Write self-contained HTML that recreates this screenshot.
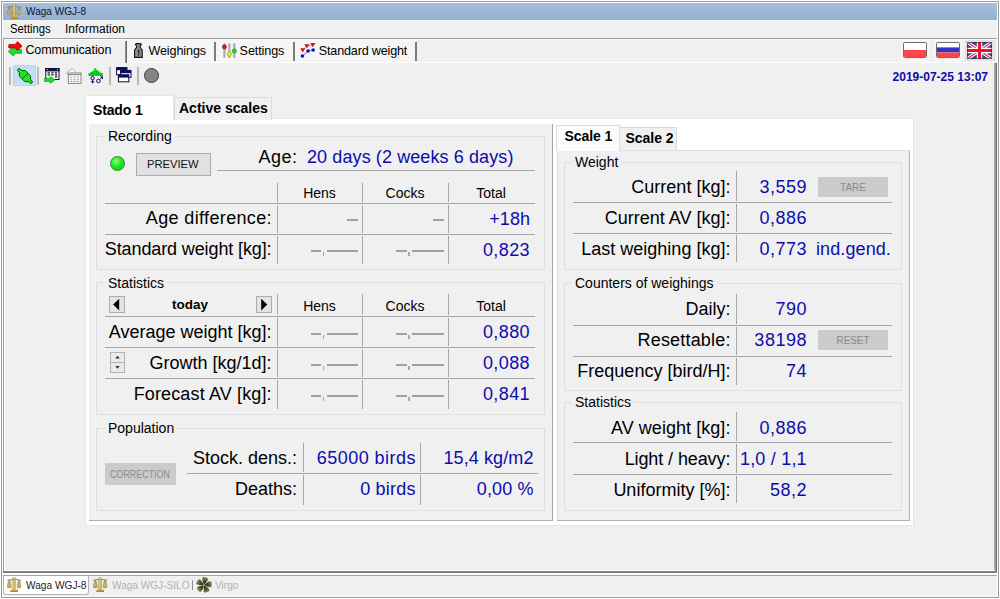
<!DOCTYPE html>
<html><head><meta charset="utf-8">
<title>Waga WGJ-8</title>
<style>
*{box-sizing:border-box;margin:0;padding:0}
html,body{width:1000px;height:599px;overflow:hidden;background:#fff}
body{font-family:"Liberation Sans",sans-serif;position:relative;color:#000}
.a{position:absolute}
.t{position:absolute;white-space:pre;line-height:1}
.hl{position:absolute;height:1px;background:#a6a6a6}
.vl{position:absolute;width:1px;background:#a6a6a6}
.big{font-size:18px}
.sm{font-size:14px}
.blue{color:#0c0cae}
.gb{position:absolute;border:1px solid #dfdfdf}
.gbl{position:absolute;background:#f0f0f0;font-size:14px;line-height:1;padding:0 3px;white-space:pre}
.ds{position:absolute;height:1.7px;background:#a0a0a0}
</style></head><body>
<svg width="0" height="0" style="position:absolute"><defs>
<linearGradient id="gold" x1="0" x2="1" y1="0" y2="0"><stop offset="0" stop-color="#a88838"/><stop offset=".45" stop-color="#e2d290"/><stop offset="1" stop-color="#b09238"/></linearGradient>
<linearGradient id="pan" x1="0" x2="0" y1="0" y2="1"><stop offset="0" stop-color="#9a8c80"/><stop offset=".5" stop-color="#c8b468"/><stop offset="1" stop-color="#c8a840"/></linearGradient>
<radialGradient id="fan" cx=".5" cy=".5" r=".5"><stop offset="0" stop-color="#20200f"/><stop offset=".55" stop-color="#4a4c2a"/><stop offset="1" stop-color="#a4aa78"/></radialGradient>
<radialGradient id="grn" cx=".4" cy=".35" r=".7"><stop offset="0" stop-color="#6f6"/><stop offset=".6" stop-color="#1fe31f"/><stop offset="1" stop-color="#11c011"/></radialGradient>
</defs></svg>
<div class="a" style="left:1px;top:1px;width:998px;height:597px;border:1px solid #999;background:#fff"></div>
<div class="a" style="left:3px;top:3px;width:994px;height:17px;background:linear-gradient(#a7bfde,#9bb5d7 60%,#97b1d4)"></div>
<div class="a" style="left:3px;top:20px;width:994px;height:576px;background:#f0f0f0"></div>
<div class="a" style="left:3px;top:20px;width:994px;height:18px;background:#f1f1f1"></div>
<div class="t" style="left:25.8px;top:6px;font-size:11.2px;color:#0c1428;transform-origin:0 0;transform:scaleX(.9)">Waga WGJ-8</div>
<div class="t" style="left:10px;top:23px;font-size:12px;transform-origin:0 0;transform:scaleX(.94)">Settings</div>
<div class="t" style="left:65px;top:23px;font-size:12px">Information</div>
<div class="a" style="left:3px;top:38px;width:994px;height:1px;background:#9c9c9c"></div>
<div class="a" style="left:127px;top:40px;width:289px;height:22px;background:#f5f5f5"></div>
<div class="a" style="left:127px;top:39px;width:868px;height:1px;background:#fafafa"></div>
<div class="a" style="left:4px;top:39px;width:123px;height:24px;background:#f0f0f0;border-left:1px solid #fff;border-top:1px solid #fff"></div>
<div class="a" style="left:125.2px;top:40.6px;width:1.7px;height:22px;background:linear-gradient(90deg,#9a9a9a,#5c5c5c)"></div>
<div class="a" style="left:127px;top:62px;width:868px;height:1px;background:#fff"></div>
<div class="t" style="left:25.4px;top:43.8px;font-size:12.6px;letter-spacing:-0.12px">Communication</div>
<div class="t" style="left:148.4px;top:45.2px;font-size:12.6px;letter-spacing:-0.1px">Weighings</div>
<div class="t" style="left:239.6px;top:45.2px;font-size:12.6px;letter-spacing:-0.1px">Settings</div>
<div class="t" style="left:318.8px;top:45.2px;font-size:12.6px;letter-spacing:-0.18px">Standard weight</div>
<div class="a" style="left:214.4px;top:42px;width:1.4px;height:19px;background:#7c7c7c"></div>
<div class="a" style="left:293.4px;top:42px;width:1.4px;height:19px;background:#7c7c7c"></div>
<div class="a" style="left:415.4px;top:42px;width:1.4px;height:19px;background:#7c7c7c"></div>
<div class="a" style="left:994.4px;top:63px;width:1.3px;height:509px;background:#a2a2a2"></div>
<div class="a" style="left:995.6px;top:62.6px;width:1.4px;height:510px;background:#6a6a6a"></div>
<div class="a" style="left:3px;top:571px;width:994px;height:2px;background:#7e7e7e"></div>
<div class="a" style="left:3px;top:570px;width:992px;height:1px;background:#fff"></div>
<div class="a" style="left:3px;top:573px;width:994px;height:2px;background:#fff"></div>
<div class="a" style="left:3px;top:575px;width:994px;height:1px;background:#a0a0a0"></div>
<div class="a" style="left:4px;top:63px;width:1px;height:507px;background:#fff"></div>
<div class="a" style="left:3px;top:39px;width:1px;height:532px;background:#9c9c9c"></div>
<div class="t blue" style="right:12px;top:71px;font-size:12px;font-weight:bold">2019-07-25 13:07</div>
<div class="a" style="left:13px;top:65px;width:23px;height:21px;background:#c2dff5;border:1px solid #b4d6f2"></div>
<div class="a" style="left:9.3px;top:67px;width:1.7px;height:18px;background:#bababa"></div>
<div class="a" style="left:37.2px;top:67px;width:1.7px;height:18px;background:#bababa"></div>
<div class="a" style="left:109.3px;top:67px;width:1.7px;height:18px;background:#bababa"></div>
<div class="a" style="left:137.2px;top:67px;width:1.7px;height:18px;background:#bababa"></div>
<svg class="a" style="left:16.6px;top:67.5px" width="16" height="16" viewBox="0 0 16 16"><g transform="translate(8,8) rotate(45)"><path d="M-9.4 -1.4 L-6.8 -1.4 L-3.6 -4.1 L3.6 -4.1 L6.8 -1.4 L9.4 -1.4 Q10.2 0 9.4 1.4 L6.8 1.4 L3.6 4.1 L-3.6 4.1 L-6.8 1.4 L-9.4 1.4 Q-10.2 0 -9.4 -1.4Z" fill="#22e422" stroke="#054a05" stroke-width=".9" stroke-linejoin="round"/><path d="M0 -4.1 L0 4.1" stroke="#054a05" stroke-width=".8"/></g></svg>
<svg class="a" style="left:43.6px;top:67.6px" width="16" height="16" viewBox="0 0 16 16"><rect x="1.8" y="0.5" width="13.2" height="11" fill="#fff" stroke="#0c0c38" stroke-width="1"/><rect x="1.8" y="0.5" width="13.2" height="2.4" fill="#101070" stroke="#0c0c38" stroke-width="1"/><circle cx="3.4" cy="1.6" r=".6" fill="#dde"/><circle cx="13.4" cy="1.6" r=".6" fill="#dde"/><g stroke="#181818" stroke-width="1.1"><path d="M3.6 4.9 h2.4 M7.2 4.9 h2.4 M10.8 4.9 h2.4 M3.6 6.9 h2.4 M7.2 6.9 h2.4 M10.8 6.9 h2.4 M10.8 8.9 h2.4"/></g><path d="M0.6 10.2 L6.2 10.2 L6.2 8.4 L11 11.8 L6.2 15.4 L6.2 13.4 L0.6 13.4Z" fill="#1fdc2a" stroke="#0c9a14" stroke-width=".7" stroke-linejoin="round"/></svg>
<svg class="a" style="left:65.6px;top:67.6px" width="16" height="16" viewBox="0 0 16 16"><path d="M0.6 4.6 L6.2 0.6 L10.6 5.4 L6 5.4 L2 7Z" fill="#fff" stroke="#9a9a9a" stroke-width=".8" stroke-linejoin="round"/><rect x="2.4" y="5" width="12.6" height="10.4" fill="#fff" stroke="#8e8e8e" stroke-width="1.1"/><path d="M2.4 6.6 h12.6" stroke="#8e8e8e" stroke-width="1.2"/><g stroke="#9c9c9c" stroke-width="1.1"><path d="M4.4 9 h2 M7.6 9 h2 M10.8 9 h2 M4.4 11.2 h2 M7.6 11.2 h2 M10.8 11.2 h2 M4.4 13.4 h2 M7.6 13.4 h2 M10.8 13.4 h2"/></g></svg>
<svg class="a" style="left:88px;top:67.8px" width="16" height="16" viewBox="0 0 16 16"><path d="M0.3 8 L0.3 5 L2.2 5 L2.2 4 L4.2 4 L4.2 2.8 L6 2.8 L6 0.2 L8.4 0.2 L8.4 2.2 L10.4 2.2 L10.4 3.6 L12.6 3.6 L12.6 5 L15 5 L15 8Z" fill="#14e01e"/><g stroke="#0a9c12" stroke-width=".7"><path d="M2.2 5V8 M4.2 4V8 M6 2.8V8 M8.4 2.2V8 M10.4 3.6V8 M12.6 5V8"/></g><circle cx="4.6" cy="10.2" r="1.7" fill="none" stroke="#101060" stroke-width="1"/><path d="M4.6 12 V15.4 M2.8 13.8 H6.4" stroke="#101060" stroke-width="1"/><circle cx="10.4" cy="13" r="1.8" fill="none" stroke="#101060" stroke-width="1"/><path d="M11.8 11.6 L14.4 9 " stroke="#101060" stroke-width="1" fill="none"/><path d="M12 8.2 H15 V11.4Z" fill="#101060"/></svg>
<svg class="a" style="left:115.8px;top:67.4px" width="16" height="16" viewBox="0 0 16 16"><rect x="0.6" y="0.6" width="10.4" height="7.2" fill="#fff" stroke="#0a0a3c" stroke-width="1"/><rect x="0.6" y="0.6" width="10.4" height="2.6" fill="#0c0c68"/><rect x="4.6" y="3.4" width="10.4" height="7" fill="#fff" stroke="#0a0a3c" stroke-width="1"/><rect x="4.6" y="3.4" width="10.4" height="2.8" fill="#0c0c68"/><rect x="2.4" y="7.8" width="10.4" height="7" fill="#fff" stroke="#0a0a3c" stroke-width="1"/><rect x="2.4" y="7.8" width="10.4" height="2.8" fill="#0c0c68"/></svg>
<div class="a" style="left:144px;top:67.7px;width:15px;height:15px;border-radius:50%;background:#848484;border:1px solid #3c3c3c"></div>
<svg class="a" style="left:7.6px;top:40.6px" width="14.5" height="15.5" viewBox="0 0 14.5 15.5"><path d="M13.8 8.7 L7.6 8.7 L5 6 L0.4 10.4 L5 14.9 L7.6 12.2 L13.8 12.2 Q14.6 10.4 13.8 8.7Z" fill="#14e62a" stroke="#0aa018" stroke-width=".8" stroke-linejoin="round"/><path d="M1 3.4 L7.2 3.4 L9.6 0.6 L14.1 5.2 L9.6 9.5 L7.2 7 L1 7 Q0.2 5.2 1 3.4Z" fill="#f40a0a" stroke="#a80a0a" stroke-width=".8" stroke-linejoin="round"/></svg>
<svg class="a" style="left:133.6px;top:43px" width="9" height="15" viewBox="0 0 9 15"><path d="M2.2 0.6 L6.6 0.6 L7.4 1.6 L6.2 3 L6.2 4.4 L8.2 7 L8.2 14.4 L0.6 14.4 L0.6 7 L2.6 4.4 L2.6 3 L1.4 1.6Z" fill="#909090" stroke="#111" stroke-width="1.1" stroke-linejoin="round"/><path d="M3.6 8.2 L4.8 7.4 L4.8 12.8" fill="none" stroke="#222" stroke-width="1.1"/></svg>
<svg class="a" style="left:222px;top:43px" width="15" height="15" viewBox="0 0 15 15"><rect x="1.3" y="0.3" width="2.3" height="14.4" fill="#adadad"/><rect x="6.3" y="0.3" width="2.3" height="14.4" fill="#adadad"/><rect x="11.1" y="0.3" width="2.3" height="14.4" fill="#adadad"/><circle cx="2.45" cy="3.9" r="2.1" fill="#e41818" stroke="#941010" stroke-width=".6"/><circle cx="7.45" cy="11" r="2.1" fill="#eeee18" stroke="#9c9c10" stroke-width=".6"/><circle cx="12.3" cy="8" r="2.1" fill="#18dc28" stroke="#0c8c18" stroke-width=".6"/></svg>
<svg class="a" style="left:300.4px;top:43px" width="16" height="15" viewBox="0 -1 16 15"><path d="M2.4 12 L8 7 L13.2 6" fill="none" stroke="#1010b0" stroke-width=".9" stroke-dasharray="1.2 .8"/><path d="M2.8 6 L6.8 2 L12.8 0.8" fill="none" stroke="#d01010" stroke-width=".9" stroke-dasharray="1.2 .8"/><circle cx="2.4" cy="12" r="1.8" fill="#1010b4"/><circle cx="8" cy="7" r="1.8" fill="#1010b4"/><circle cx="13.2" cy="6" r="1.8" fill="#1010b4"/><path d="M0.3 4.2 L5.3 4.2 L2.8 8.4Z" fill="#d41010"/><path d="M4.3 0.2 L9.3 0.2 L6.8 4.4Z" fill="#d41010"/><path d="M10.3 -0.9 L15.3 -0.9 L12.8 3.3Z" fill="#d41010"/></svg>
<div class="a" style="left:900.5px;top:40px;width:28px;height:20.5px;border:1px solid #f9f9f9;background:#f2f2f2"></div>
<div class="a" style="left:933.5px;top:40px;width:28px;height:20.5px;border:1px solid #f9f9f9;background:#f2f2f2"></div>
<div class="a" style="left:964.5px;top:40px;width:30px;height:21px;background:#e2e2e2"></div>
<svg class="a" style="left:903px;top:42px" width="24" height="16" viewBox="0 0 24 16"><rect x=".5" y=".5" width="23" height="15" rx="1.2" fill="#fff" stroke="#6e6e6e"/><path d="M1 8 H23 V14 Q23 15 22 15 H2 Q1 15 1 14Z" fill="#ff4545"/></svg>
<svg class="a" style="left:936px;top:42px" width="24" height="16" viewBox="0 0 24 16"><rect x=".5" y=".5" width="23" height="15" rx="1.2" fill="#fff" stroke="#6e6e6e"/><rect x="1" y="5.4" width="22" height="5" fill="#3434c0"/><path d="M1 10.4 H23 V14 Q23 15 22 15 H2 Q1 15 1 14Z" fill="#ff4545"/></svg>
<svg class="a" style="left:967px;top:42px" width="25" height="17" viewBox="0 0 25 17"><rect x="0" y="0" width="25" height="17" fill="#2a4a9c"/><path d="M0 0 L25 17 M25 0 L0 17" stroke="#fff" stroke-width="3.4"/><path d="M0 0 L25 17 M25 0 L0 17" stroke="#e8203c" stroke-width="1.2"/><path d="M12.5 0 V17 M0 8.5 H25" stroke="#fff" stroke-width="5.4"/><path d="M12.5 0 V17 M0 8.5 H25" stroke="#f0102c" stroke-width="3.2"/><rect x=".5" y=".5" width="24" height="16" fill="none" stroke="#222" stroke-width="1" stroke-dasharray="1 1"/></svg>
<svg class="a" style="left:6.6px;top:4.2px" width="14.5" height="15" viewBox="0 0 14.5 15"><path d="M0.3 3.4 Q7.2 0.9 14.1 3.4" fill="none" stroke="#8c7c58" stroke-width="1"/><path d="M2.3 3 C0.9 5.6 0.1 8.4 0.4 10.3 Q2.3 11.5 4.3 10.3 C4.5 8.4 3.8 5.6 2.5 3Z" fill="url(#pan)" stroke="#8a7860" stroke-width=".5"/><path d="M11.9 3 C10.5 5.6 9.8 8.4 10.1 10.3 Q12 11.5 14 10.3 C14.2 8.4 13.4 5.6 12.1 3Z" fill="url(#pan)" stroke="#8a7860" stroke-width=".5"/><rect x="5.5" y="0.3" width="3.2" height="12.6" rx=".8" fill="url(#gold)"/><rect x="3.4" y="12.6" width="7.6" height="2.2" rx=".4" fill="#c4a43c"/><rect x="3.4" y="14" width="7.6" height=".9" fill="#a0822c"/></svg>
<div class="a" style="left:84.6px;top:118.4px;width:829.4px;height:407.2px;background:#fff;border:1px solid #e6e6e6"></div>
<div class="a" style="left:84.6px;top:94.6px;width:89.6px;height:27px;background:#fff;border:1px solid #e6e6e6;border-bottom:none"></div>
<div class="a" style="left:174px;top:97px;width:98px;height:23px;background:#f0f0f0;border:1px solid #dcdcdc;border-bottom:none"></div>
<div class="t" style="left:93px;top:103px;font-size:14px;font-weight:bold;letter-spacing:-0.15px">Stado 1</div>
<div class="t" style="left:179px;top:101px;font-size:14px;font-weight:bold">Active scales</div>
<div class="a" style="left:89.4px;top:124px;width:463.6px;height:397px;background:#f0f0f0;border-right:1.3px solid #a8a8a8;border-bottom:1px solid #b0b0b0"></div>
<div class="gb" style="left:96px;top:136px;width:449px;height:134px"></div>
<div class="gbl" style="left:105px;top:129px">Recording</div>
<div class="a" style="left:110.4px;top:155.5px;width:15px;height:15px;border-radius:50%;background:radial-gradient(circle at 38% 32%,#7dff7d 0,#22e622 45%,#12c812 100%);border:1px solid #2c8a2c"></div>
<div class="a" style="left:135.7px;top:153.2px;width:75px;height:22.6px;border:1px solid #adadad;background:#e1e1e1"></div>
<div class="t " style="left:22.80000000000001px;width:300px;text-align:center;top:159.03px;font-size:11.2px;color:#111">PREVIEW</div>
<div class="t " style="right:702.5px;top:148.21px;font-size:18px;;letter-spacing:0.5px">Age:</div>
<div class="t blue" style="left:307px;top:148.21px;font-size:18px;;letter-spacing:0.1px">20 days (2 weeks 6 days)</div>
<div class="hl" style="left:217px;top:170px;width:318px;"></div>
<div class="t " style="left:169.5px;width:300px;text-align:center;top:186.16px;font-size:14px;">Hens</div>
<div class="t " style="left:255px;width:300px;text-align:center;top:186.16px;font-size:14px;">Cocks</div>
<div class="t " style="left:341px;width:300px;text-align:center;top:186.16px;font-size:14px;">Total</div>
<div class="hl" style="left:105px;top:203px;width:430px;"></div>
<div class="hl" style="left:105px;top:234px;width:430px;"></div>
<div class="vl" style="left:277px;top:183px;height:19px;"></div>
<div class="vl" style="left:277px;top:205px;height:28px;"></div>
<div class="vl" style="left:277px;top:236px;height:28px;"></div>
<div class="vl" style="left:362.3px;top:183px;height:19px;"></div>
<div class="vl" style="left:362.3px;top:205px;height:28px;"></div>
<div class="vl" style="left:362.3px;top:236px;height:28px;"></div>
<div class="vl" style="left:448px;top:183px;height:19px;"></div>
<div class="vl" style="left:448px;top:205px;height:28px;"></div>
<div class="vl" style="left:448px;top:236px;height:28px;"></div>
<div class="t " style="right:728.04px;top:209.21px;font-size:18px;;letter-spacing:0.36px">Age difference:</div>
<div class="t " style="right:728.51px;top:240.21px;font-size:18px;;letter-spacing:-0.115px">Standard weight [kg]:</div>
<div class="ds" style="left:347px;top:219px;width:11px"></div>
<div class="ds" style="left:432.6px;top:219px;width:11px"></div>
<div class="ds" style="left:310.5px;top:250px;width:10.5px"></div>
<div class="ds" style="left:326.5px;top:250px;width:31.5px"></div>
<div class="a" style="left:322.5px;top:252px;width:1.5px;height:4px;background:#a8a8a8"></div>
<div class="ds" style="left:396.1px;top:250px;width:10.5px"></div>
<div class="ds" style="left:412.1px;top:250px;width:31.5px"></div>
<div class="a" style="left:408.1px;top:252px;width:1.5px;height:4px;background:#a8a8a8"></div>
<div class="t blue" style="right:469.9px;top:210.01px;font-size:18px;;letter-spacing:0.1px">+18h</div>
<div class="t blue" style="right:469.98px;top:240.61px;font-size:18px;;letter-spacing:0.42px">0,823</div>
<div class="gb" style="left:96px;top:281.6px;width:449px;height:133.89999999999998px"></div>
<div class="gbl" style="left:105px;top:275.5px">Statistics</div>
<div class="t " style="left:169.5px;width:300px;text-align:center;top:298.66px;font-size:14px;">Hens</div>
<div class="t " style="left:255px;width:300px;text-align:center;top:298.66px;font-size:14px;">Cocks</div>
<div class="t " style="left:341px;width:300px;text-align:center;top:298.66px;font-size:14px;">Total</div>
<div class="hl" style="left:105px;top:316px;width:430px;"></div>
<div class="hl" style="left:105px;top:347px;width:430px;"></div>
<div class="hl" style="left:105px;top:378px;width:430px;"></div>
<div class="vl" style="left:277px;top:294px;height:21px;"></div>
<div class="vl" style="left:277px;top:318px;height:28px;"></div>
<div class="vl" style="left:277px;top:349px;height:28px;"></div>
<div class="vl" style="left:277px;top:380px;height:29px;"></div>
<div class="vl" style="left:362.3px;top:294px;height:21px;"></div>
<div class="vl" style="left:362.3px;top:318px;height:28px;"></div>
<div class="vl" style="left:362.3px;top:349px;height:28px;"></div>
<div class="vl" style="left:362.3px;top:380px;height:29px;"></div>
<div class="vl" style="left:448px;top:294px;height:21px;"></div>
<div class="vl" style="left:448px;top:318px;height:28px;"></div>
<div class="vl" style="left:448px;top:349px;height:28px;"></div>
<div class="vl" style="left:448px;top:380px;height:29px;"></div>
<div class="t " style="left:40px;width:300px;text-align:center;top:298.41px;font-size:13.5px;font-weight:bold">today</div>
<div class="t " style="right:728.4px;top:323.21px;font-size:18px;">Average weight [kg]:</div>
<div class="t " style="right:728.4px;top:354.21px;font-size:18px;">Growth [kg/1d]:</div>
<div class="t " style="right:728.26px;top:385.21px;font-size:18px;;letter-spacing:0.14px">Forecast AV [kg]:</div>
<div class="ds" style="left:310.5px;top:333px;width:10.5px"></div>
<div class="ds" style="left:326.5px;top:333px;width:31.5px"></div>
<div class="a" style="left:322.5px;top:335px;width:1.5px;height:4px;background:#a8a8a8"></div>
<div class="ds" style="left:396.1px;top:333px;width:10.5px"></div>
<div class="ds" style="left:412.1px;top:333px;width:31.5px"></div>
<div class="a" style="left:408.1px;top:335px;width:1.5px;height:4px;background:#a8a8a8"></div>
<div class="ds" style="left:310.5px;top:364px;width:10.5px"></div>
<div class="ds" style="left:326.5px;top:364px;width:31.5px"></div>
<div class="a" style="left:322.5px;top:366px;width:1.5px;height:4px;background:#a8a8a8"></div>
<div class="ds" style="left:396.1px;top:364px;width:10.5px"></div>
<div class="ds" style="left:412.1px;top:364px;width:31.5px"></div>
<div class="a" style="left:408.1px;top:366px;width:1.5px;height:4px;background:#a8a8a8"></div>
<div class="ds" style="left:310.5px;top:395px;width:10.5px"></div>
<div class="ds" style="left:326.5px;top:395px;width:31.5px"></div>
<div class="a" style="left:322.5px;top:397px;width:1.5px;height:4px;background:#a8a8a8"></div>
<div class="ds" style="left:396.1px;top:395px;width:10.5px"></div>
<div class="ds" style="left:412.1px;top:395px;width:31.5px"></div>
<div class="a" style="left:408.1px;top:397px;width:1.5px;height:4px;background:#a8a8a8"></div>
<div class="t blue" style="right:469.98px;top:323.21px;font-size:18px;;letter-spacing:0.42px">0,880</div>
<div class="t blue" style="right:469.98px;top:354.21px;font-size:18px;;letter-spacing:0.42px">0,088</div>
<div class="t blue" style="right:469.98px;top:385.21px;font-size:18px;;letter-spacing:0.42px">0,841</div>
<div class="a" style="left:109px;top:296px;width:16px;height:17px;background:#e3e3e3;border:1px solid #adadad"></div>
<div class="a" style="left:256px;top:296px;width:16px;height:17px;background:#e3e3e3;border:1px solid #adadad"></div>
<svg class="a" style="left:109px;top:296px" width="16" height="17"><path d="M10.2 2.8 L4.1 8.6 L10.2 14.4Z" fill="#000"/></svg>
<svg class="a" style="left:256px;top:296px" width="16" height="17"><path d="M5.2 2.8 L11.3 8.6 L5.2 14.4Z" fill="#000"/></svg>
<div class="a" style="left:109.5px;top:352px;width:15px;height:10.5px;background:#ebebeb;border:1px solid #b4b4b4"></div>
<div class="a" style="left:109.5px;top:362px;width:15px;height:10.5px;background:#ebebeb;border:1px solid #b4b4b4"></div>
<svg class="a" style="left:109.5px;top:352px" width="15" height="21"><path d="M5.2 6.6 L7.5 3.8 L9.8 6.6Z M5.2 14 L7.5 16.8 L9.8 14Z" fill="#333"/></svg>
<div class="gb" style="left:96px;top:428px;width:449px;height:82.80000000000001px"></div>
<div class="gbl" style="left:105px;top:421px">Population</div>
<div class="a" style="left:105px;top:463.4px;width:71px;height:22px;background:#cbcbcb"></div>
<div class="t " style="left:-10px;width:300px;text-align:center;top:469.32px;font-size:10.6px;color:#8c8c8c;transform:scaleX(.84)">CORRECTION</div>
<div class="hl" style="left:187px;top:473px;width:351px;"></div>
<div class="vl" style="left:303px;top:443px;height:29px;"></div>
<div class="vl" style="left:303px;top:475px;height:30px;"></div>
<div class="vl" style="left:420px;top:443px;height:29px;"></div>
<div class="vl" style="left:420px;top:475px;height:30px;"></div>
<div class="t " style="right:703px;top:449.21px;font-size:18px;">Stock. dens.:</div>
<div class="t " style="right:703px;top:480.21px;font-size:18px;">Deaths:</div>
<div class="t blue" style="right:584.15px;top:449.21px;font-size:18px;;letter-spacing:0.45px">65000 birds</div>
<div class="t blue" style="right:584.4px;top:480.21px;font-size:18px;;letter-spacing:0.2px">0 birds</div>
<div class="t blue" style="right:466.5px;top:449.21px;font-size:18px;;letter-spacing:0.1px">15,4 kg/m2</div>
<div class="t blue" style="right:466.5px;top:480.21px;font-size:18px;;letter-spacing:0.1px">0,00 %</div>
<div class="a" style="left:556.5px;top:149.5px;width:353.5px;height:371.5px;background:#f0f0f0;border:1px solid #dedede;border-right:1px solid #b0b0b0;border-bottom:1px solid #b0b0b0"></div>
<div class="a" style="left:556.2px;top:125px;width:63.8px;height:25.6px;background:#fcfcfc;border:1px solid #dcdcdc;border-bottom:none"></div>
<div class="a" style="left:620px;top:127.3px;width:57px;height:22.4px;background:#f0f0f0;border:1px solid #d9d9d9;border-bottom:none;border-left:none"></div>
<div class="t" style="left:564.6px;top:129.1px;font-size:14px;font-weight:bold;letter-spacing:-0.1px">Scale 1</div>
<div class="t" style="left:625.4px;top:131.3px;font-size:14px;font-weight:bold">Scale 2</div>
<div class="gb" style="left:563.5px;top:161.6px;width:338.5px;height:108.4px"></div>
<div class="gbl" style="left:572px;top:154.8px">Weight</div>
<div class="hl" style="left:573px;top:202px;width:319px;"></div>
<div class="hl" style="left:573px;top:233px;width:319px;"></div>
<div class="vl" style="left:736px;top:171px;height:30px;"></div>
<div class="vl" style="left:736px;top:204px;height:28px;"></div>
<div class="vl" style="left:736px;top:235px;height:27px;"></div>
<div class="t " style="right:269.6px;top:178.21px;font-size:18px;">Current [kg]:</div>
<div class="t blue" style="right:192.9px;top:178.21px;font-size:18px;;letter-spacing:0.5px">3,559</div>
<div class="t " style="right:269.6px;top:209.21px;font-size:18px;">Current AV [kg]:</div>
<div class="t blue" style="right:192.9px;top:209.21px;font-size:18px;;letter-spacing:0.5px">0,886</div>
<div class="t " style="right:269.6px;top:240.21px;font-size:18px;">Last weighing [kg]:</div>
<div class="t blue" style="right:192.9px;top:240.21px;font-size:18px;;letter-spacing:0.5px">0,773</div>
<div class="a" style="left:818px;top:177px;width:70px;height:20px;background:#cbcbcb"></div>
<div class="t " style="left:703px;width:300px;text-align:center;top:182.62px;font-size:10.2px;color:#8a8a8a;transform:scaleX(.97)">TARE</div>
<div class="t blue" style="left:816px;top:240.21px;font-size:18px;;letter-spacing:0.1px">ind.gend.</div>
<div class="gb" style="left:563.5px;top:282.5px;width:338.5px;height:108.0px"></div>
<div class="gbl" style="left:572px;top:275.7px">Counters of weighings</div>
<div class="hl" style="left:573px;top:324.5px;width:319px;"></div>
<div class="hl" style="left:573px;top:355.5px;width:319px;"></div>
<div class="vl" style="left:736px;top:294px;height:29.5px;"></div>
<div class="vl" style="left:736px;top:326.5px;height:28.0px;"></div>
<div class="vl" style="left:736px;top:357.5px;height:27.5px;"></div>
<div class="t " style="right:269.6px;top:300.21px;font-size:18px;">Daily:</div>
<div class="t blue" style="right:192.9px;top:300.21px;font-size:18px;;letter-spacing:0.5px">790</div>
<div class="t " style="right:269.42px;top:331.21px;font-size:18px;;letter-spacing:0.18px">Resettable:</div>
<div class="t blue" style="right:192.85px;top:331.21px;font-size:18px;;letter-spacing:0.55px">38198</div>
<div class="t " style="right:269.6px;top:362.21px;font-size:18px;">Frequency [bird/H]:</div>
<div class="t blue" style="right:192.9px;top:362.21px;font-size:18px;;letter-spacing:0.5px">74</div>
<div class="a" style="left:818px;top:330px;width:70px;height:20px;background:#cbcbcb"></div>
<div class="t " style="left:703px;width:300px;text-align:center;top:335.62px;font-size:10.2px;color:#8a8a8a;transform:scaleX(.97)">RESET</div>
<div class="gb" style="left:563.5px;top:402px;width:338.5px;height:108.69999999999999px"></div>
<div class="gbl" style="left:572px;top:395.2px">Statistics</div>
<div class="hl" style="left:573px;top:442px;width:319px;"></div>
<div class="hl" style="left:573px;top:473.5px;width:319px;"></div>
<div class="vl" style="left:736px;top:412px;height:29px;"></div>
<div class="vl" style="left:736px;top:444px;height:28.5px;"></div>
<div class="vl" style="left:736px;top:475.5px;height:27.5px;"></div>
<div class="t " style="right:269.55px;top:418.81px;font-size:18px;;letter-spacing:0.05px">AV weight [kg]:</div>
<div class="t blue" style="right:192.9px;top:418.81px;font-size:18px;;letter-spacing:0.5px">0,886</div>
<div class="t " style="right:269.7px;top:449.71px;font-size:18px;;letter-spacing:-0.1px">Light / heavy:</div>
<div class="t blue" style="right:193.2px;top:449.71px;font-size:18px;;letter-spacing:0.2px">1,0 / 1,1</div>
<div class="t " style="right:269.6px;top:480.51px;font-size:18px;">Uniformity [%]:</div>
<div class="t blue" style="right:192.9px;top:480.51px;font-size:18px;;letter-spacing:0.5px">58,2</div>
<div class="a" style="left:3.4px;top:575.5px;width:86px;height:19px;background:#fff;border:1px solid #b4b4b4;border-top:none;border-radius:0 0 3.5px 3.5px"></div>
<div class="t" style="left:25.8px;top:579.6px;font-size:11.4px;color:#1c1c1c;transform-origin:0 0;transform:scaleX(.89)">Waga WGJ-8</div>
<div class="t" style="left:112px;top:579.6px;font-size:11.4px;color:#b2b2b2;transform-origin:0 0;transform:scaleX(.885)">Waga WGJ-SILO</div>
<div class="t" style="left:215px;top:579.6px;font-size:11.4px;color:#b2b2b2;transform-origin:0 0;transform:scaleX(.89)">Virgo</div>
<div class="vl" style="left:192.2px;top:580.4px;height:10.0px;background:#8e8e8e"></div>
<svg class="a" style="left:6.6px;top:576.8px" width="14.5" height="15" viewBox="0 0 14.5 15"><path d="M0.3 3.4 Q7.2 0.9 14.1 3.4" fill="none" stroke="#8c7c58" stroke-width="1"/><path d="M2.3 3 C0.9 5.6 0.1 8.4 0.4 10.3 Q2.3 11.5 4.3 10.3 C4.5 8.4 3.8 5.6 2.5 3Z" fill="url(#pan)" stroke="#8a7860" stroke-width=".5"/><path d="M11.9 3 C10.5 5.6 9.8 8.4 10.1 10.3 Q12 11.5 14 10.3 C14.2 8.4 13.4 5.6 12.1 3Z" fill="url(#pan)" stroke="#8a7860" stroke-width=".5"/><rect x="5.5" y="0.3" width="3.2" height="12.6" rx=".8" fill="url(#gold)"/><rect x="3.4" y="12.6" width="7.6" height="2.2" rx=".4" fill="#c4a43c"/><rect x="3.4" y="14" width="7.6" height=".9" fill="#a0822c"/></svg>
<svg class="a" style="left:93.2px;top:576.8px" width="14.5" height="15" viewBox="0 0 14.5 15"><path d="M0.3 3.4 Q7.2 0.9 14.1 3.4" fill="none" stroke="#8c7c58" stroke-width="1"/><path d="M2.3 3 C0.9 5.6 0.1 8.4 0.4 10.3 Q2.3 11.5 4.3 10.3 C4.5 8.4 3.8 5.6 2.5 3Z" fill="url(#pan)" stroke="#8a7860" stroke-width=".5"/><path d="M11.9 3 C10.5 5.6 9.8 8.4 10.1 10.3 Q12 11.5 14 10.3 C14.2 8.4 13.4 5.6 12.1 3Z" fill="url(#pan)" stroke="#8a7860" stroke-width=".5"/><rect x="5.5" y="0.3" width="3.2" height="12.6" rx=".8" fill="url(#gold)"/><rect x="3.4" y="12.6" width="7.6" height="2.2" rx=".4" fill="#c4a43c"/><rect x="3.4" y="14" width="7.6" height=".9" fill="#a0822c"/></svg>
<svg class="a" style="left:196.2px;top:576.6px" width="16" height="16" viewBox="0 0 16 16"><defs><linearGradient id="fang" x1="0" y1="0" x2="0" y2="1"><stop offset="0" stop-color="#8c9262"/><stop offset=".5" stop-color="#484a26"/><stop offset="1" stop-color="#15150a"/></linearGradient></defs><g transform="translate(8,8)"><g transform="rotate(10)"><path d="M0 0 C-1.5 -3 -3.6 -5.5 -2.4 -7.6 C-0.5 -8.4 2.6 -7.8 3.2 -6.4 C2.6 -4 1.2 -2 0 0Z" fill="url(#fang)"/></g><g transform="rotate(82)"><path d="M0 0 C-1.5 -3 -3.6 -5.5 -2.4 -7.6 C-0.5 -8.4 2.6 -7.8 3.2 -6.4 C2.6 -4 1.2 -2 0 0Z" fill="url(#fang)"/></g><g transform="rotate(154)"><path d="M0 0 C-1.5 -3 -3.6 -5.5 -2.4 -7.6 C-0.5 -8.4 2.6 -7.8 3.2 -6.4 C2.6 -4 1.2 -2 0 0Z" fill="url(#fang)"/></g><g transform="rotate(226)"><path d="M0 0 C-1.5 -3 -3.6 -5.5 -2.4 -7.6 C-0.5 -8.4 2.6 -7.8 3.2 -6.4 C2.6 -4 1.2 -2 0 0Z" fill="url(#fang)"/></g><g transform="rotate(298)"><path d="M0 0 C-1.5 -3 -3.6 -5.5 -2.4 -7.6 C-0.5 -8.4 2.6 -7.8 3.2 -6.4 C2.6 -4 1.2 -2 0 0Z" fill="url(#fang)"/></g><circle r="1.3" fill="#8c9060"/></g></svg>
</body></html>
